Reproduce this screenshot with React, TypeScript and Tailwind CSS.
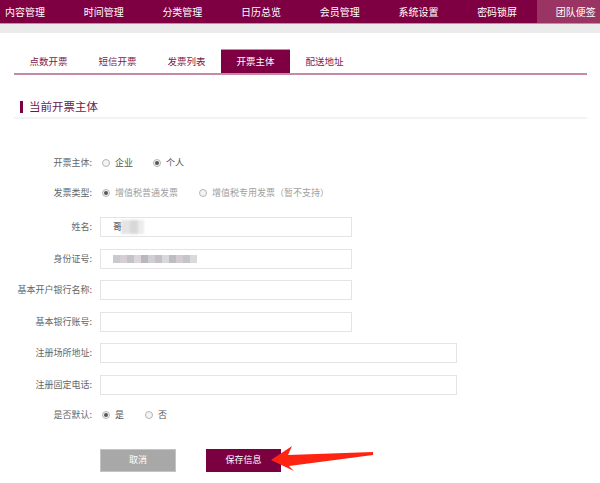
import React from "react";

const navItems = ["内容管理", "时间管理", "分类管理", "日历总览", "会员管理", "系统设置", "密码锁屏", "团队便签"];
const tabs = ["点数开票", "短信开票", "发票列表", "开票主体", "配送地址"];

const Radio = ({ checked, label, muted }: { checked?: boolean; label: string; muted?: boolean }) => (
  <span className="flex items-center">
    <span className="w-[8px] h-[8px] rounded-full border border-[#b5b5b5] bg-[#f4f4f4] flex items-center justify-center">
      {checked && <span className="w-[4px] h-[4px] rounded-full bg-[#555]" />}
    </span>
    <span className={"ml-[5px] " + (muted ? "text-[#a0a0a0]" : "text-[#555]")}>{label}</span>
  </span>
);

const Label = ({ children }: { children: React.ReactNode }) => (
  <div className="w-[80px] shrink-0 text-right text-[#666] pr-[2px]">{children}</div>
);

const Field = ({ label, wide, children }: { label: string; wide?: boolean; children?: React.ReactNode }) => (
  <div className="flex items-center h-[20px]">
    <Label>{label}</Label>
    <div
      className={
        "ml-[6px] h-[20px] border border-[#e4e4e4] bg-white relative flex items-center pl-[12px] " +
        (wide ? "w-[357px]" : "w-[252px]")
      }
    >
      {children}
    </div>
  </div>
);

export default function App() {
  return (
    <div
      className="w-[600px] h-[483px] bg-white overflow-hidden relative"
      style={{ fontFamily: '"Noto Sans CJK SC", "Noto Sans", sans-serif' }}
    >
      {/* top nav */}
      <div className="h-[24px] bg-[#7e0042] border-b border-[#c98aa8] flex overflow-hidden">
        <div className="flex ml-[-14px] shrink-0">
          {navItems.map((n, i) => (
            <div
              key={n}
              className={
                "w-[78.7px] shrink-0 h-[23px] flex items-center pl-[19px] text-[10px] text-white " +
                (i === navItems.length - 1 ? "bg-[#9a3563]" : "")
              }
            >
              {n}
            </div>
          ))}
        </div>
      </div>
      <div className="h-[9px] bg-[#ebebeb]" />

      <div className="pl-[14px] w-[587px]">
        {/* tabs */}
        <div className="mt-[16px] flex border-b-2 border-[#c48aa6] h-[26px]">
          {tabs.map((t, i) => (
            <div
              key={t}
              className={
                "w-[69px] h-[24px] flex items-center justify-center text-[9.5px] " +
                (i === 3 ? "bg-[#7e0042] text-white border-t border-[#c48aa6]" : "text-[#7a1a4e]")
              }
            >
              {t}
            </div>
          ))}
        </div>

        {/* section title */}
        <div className="mt-[24px] flex items-center h-[16px] pl-[6px]">
          <span className="w-[3px] h-[12px] bg-[#7e0042]" />
          <span className="ml-[6px] text-[11.5px] text-[#6d1a4a]">当前开票主体</span>
        </div>
        <div className="mt-[2px] h-[2px] bg-[#f3f3f3]" />

        {/* form */}
        <div className="text-[9px]">
          <div className="mt-[34px] flex items-center h-[20px]">
            <Label>开票主体:</Label>
            <div className="ml-[6px] pl-[2px] flex gap-[20px]">
              <Radio label="企业" />
              <Radio label="个人" checked />
            </div>
          </div>
          <div className="mt-[10px] flex items-center h-[20px]">
            <Label>发票类型:</Label>
            <div className="ml-[6px] pl-[2px] flex gap-[21px]">
              <Radio label="增值税普通发票" checked muted />
              <Radio label="增值税专用发票（暂不支持）" muted />
            </div>
          </div>

          <div className="mt-[14px] flex flex-col gap-[11.5px]">
            <Field label="姓名:">
              <span className="text-[#222] text-[9px]">哥</span>
              <span className="flex ml-[-1px] blur-[1px]">
                <span className="w-[9px] h-[14px] bg-[#e4e4e4]" />
                <span className="w-[8px] h-[14px] bg-[#d8d8d8]" />
                <span className="w-[6px] h-[14px] bg-[#ececec]" />
              </span>
            </Field>
            <Field label="身份证号:">
              <span className="flex h-[8px] blur-[0.6px]">
                {["#c9c9cf", "#d5cfd4", "#c2c2c8", "#dcd6da", "#b8b8be", "#cfcfd3", "#c6c0c6", "#d9d9dc", "#bdbdc3", "#d2ccd1", "#c4c4ca", "#dadadd"].map((c, i) => (
                  <span key={i} className="w-[7px] h-[8px]" style={{ backgroundColor: c }} />
                ))}
              </span>
            </Field>
            <Field label="基本开户银行名称:" />
            <Field label="基本银行账号:" />
            <Field label="注册场所地址:" wide />
            <Field label="注册固定电话:" wide />
          </div>

          <div className="mt-[10px] flex items-center h-[20px]">
            <Label>是否默认:</Label>
            <div className="ml-[6px] pl-[2px] flex gap-[21px]">
              <Radio label="是" checked />
              <Radio label="否" />
            </div>
          </div>

          <div className="mt-[24px] flex pl-[86px] gap-[30px]">
            <button className="w-[76px] h-[23px] bg-[#a8a8a8] border border-[#c4c4c4] text-white text-[9px]">取消</button>
            <button className="w-[75px] h-[23px] bg-[#7b0040] text-white text-[9px]">保存信息</button>
          </div>
        </div>
      </div>

      {/* red arrow annotation */}
      <svg className="absolute left-0 top-0 pointer-events-none" width="600" height="483">
        <polygon
          points="271,460 292,446 288,455 373,452 373,455 289,466 294,471"
          fill="#ff2412"
        />
      </svg>
    </div>
  );
}
